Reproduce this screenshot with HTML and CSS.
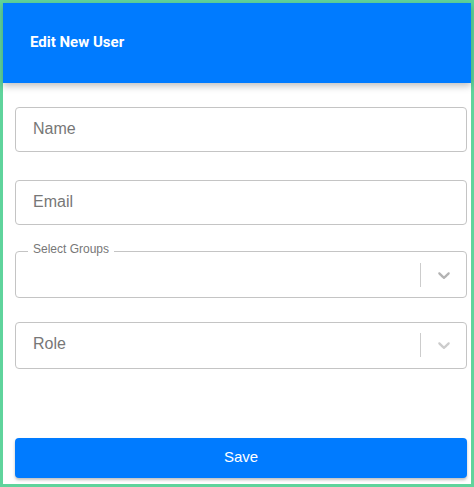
FILE: index.html
```html
<!DOCTYPE html>
<html>
<head>
<meta charset="utf-8">
<link rel="stylesheet" href="styles.css">
</head>
<body>
<div class="frame">
  <header class="header"><h1 class="title">Edit New User</h1></header>
  <form class="form">
    <div class="field f-name"><span class="ph">Name</span></div>
    <div class="field f-email"><span class="ph">Email</span></div>
    <div class="field select f-groups">
      <span class="notch">Select Groups</span>
      <div class="value"></div>
      <span class="sep"></span>
      <svg class="chev dark" viewBox="0 0 20 20" width="20" height="20"><path d="M4.516 7.548c0.436-0.446 1.043-0.481 1.576 0l3.908 3.747 3.908-3.747c0.533-0.481 1.141-0.446 1.574 0 0.436 0.445 0.408 1.197 0 1.615-0.406 0.418-4.695 4.502-4.695 4.502-0.217 0.223-0.502 0.335-0.787 0.335s-0.57-0.112-0.789-0.335c0 0-4.287-4.084-4.695-4.502s-0.436-1.170 0-1.615z"/></svg>
    </div>
    <div class="field select f-role">
      <div class="value"><span class="ph">Role</span></div>
      <span class="sep"></span>
      <svg class="chev" viewBox="0 0 20 20" width="20" height="20"><path d="M4.516 7.548c0.436-0.446 1.043-0.481 1.576 0l3.908 3.747 3.908-3.747c0.533-0.481 1.141-0.446 1.574 0 0.436 0.445 0.408 1.197 0 1.615-0.406 0.418-4.695 4.502-4.695 4.502-0.217 0.223-0.502 0.335-0.787 0.335s-0.57-0.112-0.789-0.335c0 0-4.287-4.084-4.695-4.502s-0.436-1.170 0-1.615z"/></svg>
    </div>
    <button type="button" class="save">Save</button>
  </form>
</div>
</body>
</html>
```

FILE: styles.css
```css
* { box-sizing: border-box; }
html, body { margin: 0; padding: 0; background: #fff; }
body { font-family: "Liberation Sans", Arial, sans-serif; }
.frame {
  width: 474px;
  height: 487px;
  border: 3px solid #5fd49c;
  background: #fff;
  display: flex;
  flex-direction: column;
}
.header {
  height: 80px;
  flex: none;
  background: #007bff;
  display: flex;
  align-items: center;
  padding-left: 27px;
  padding-bottom: 2px;
  box-shadow: 0 3px 7px rgba(0,0,0,0.25);
  position: relative;
  z-index: 1;
}
.title {
  margin: 0;
  color: #fff;
  font-family: Roboto, "Liberation Sans", sans-serif;
  font-weight: 700;
  font-size: 15px;
}
.form {
  padding: 24px 4px 0 12px;
  display: flex;
  flex-direction: column;
  flex: 1;
}
.field {
  border: 1px solid #c4c4c4;
  border-radius: 4px;
  height: 45px;
  display: flex;
  align-items: center;
  padding: 0 17px 2px;
  flex: none;
}
.ph { color: #777; font-size: 16px; }
.f-email { margin-top: 28px; }
.select { padding-right: 0; position: relative; }
.f-groups {
  margin-top: 26px;
  height: 47px;
  padding-bottom: 0;
}
.notch {
  position: absolute;
  left: 12px;
  top: -10px;
  padding: 0 5px;
  background: #fff;
  font-size: 12px;
  line-height: 14px;
  color: #777;
}
.f-role { margin-top: 24px; height: 47px; padding-bottom: 3px; }
.f-role .sep, .f-role .chev { position: relative; top: 1px; }
.value { flex: 1; }
.sep {
  width: 1px;
  height: 24px;
  background: #ccc;
  margin-right: 13px;
}
.chev { fill: #ccc; margin-right: 12px; }
.chev.dark { fill: #b3b3b3; }
.save {
  margin-top: auto;
  margin-bottom: 6px;
  height: 40px;
  flex: none;
  border: none;
  border-radius: 4px;
  background: #007bff;
  color: #fff;
  font-family: "Liberation Sans", Arial, sans-serif;
  font-size: 15px;
  padding: 0 0 4px;
  box-shadow: 0 2px 3px rgba(0,0,0,0.25);
}
```
